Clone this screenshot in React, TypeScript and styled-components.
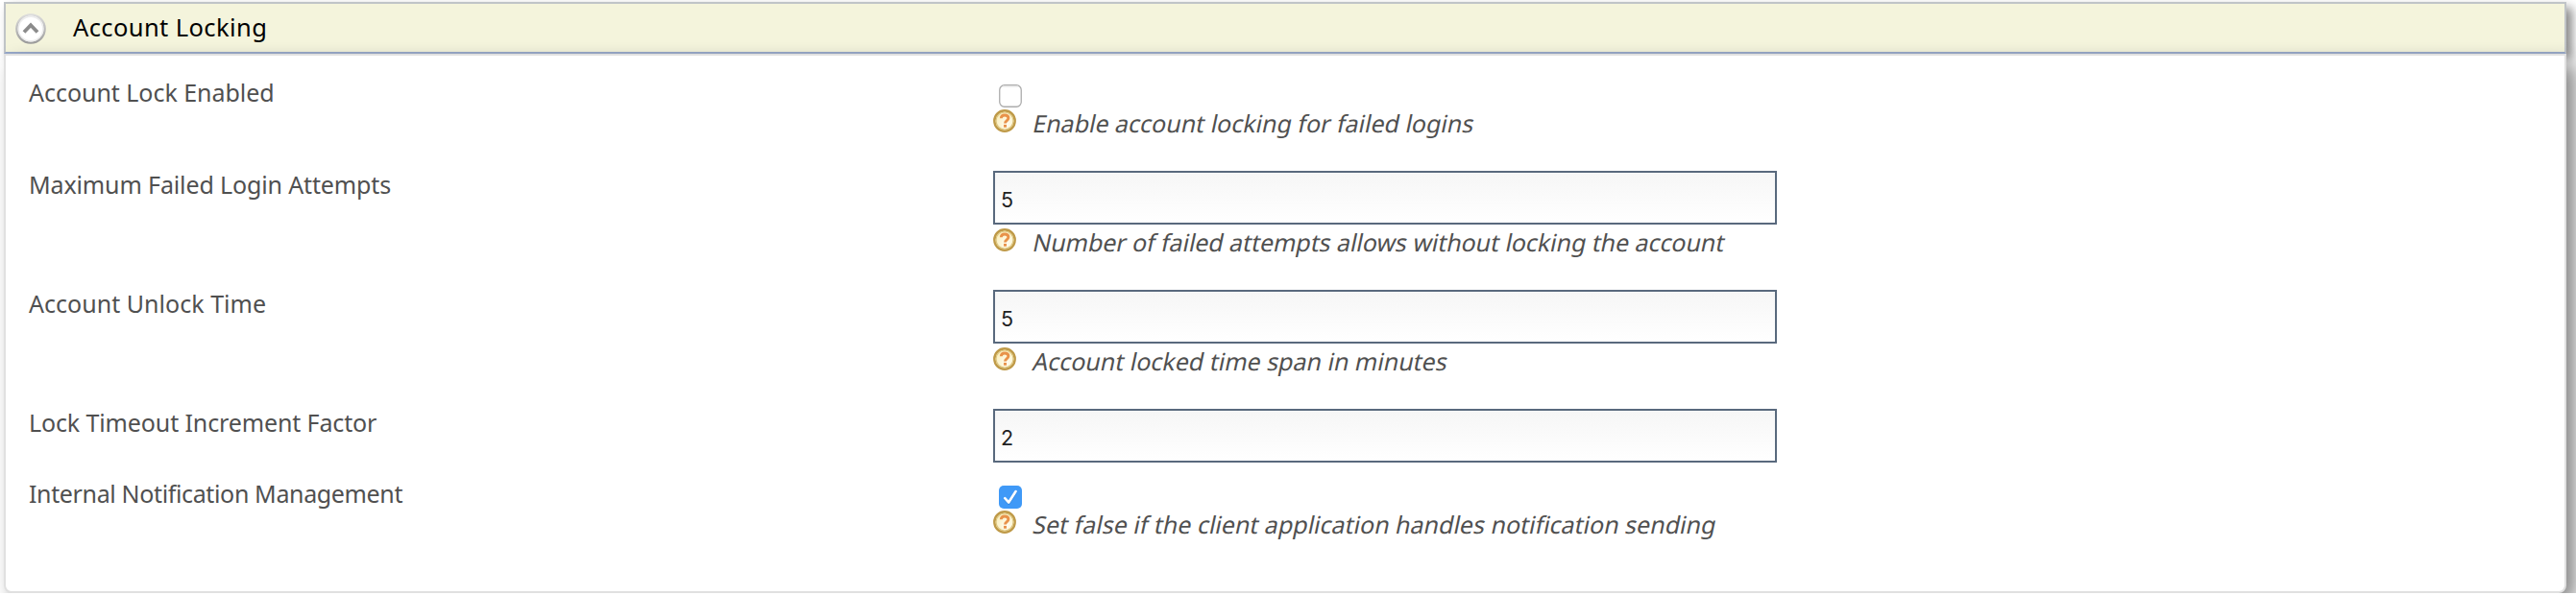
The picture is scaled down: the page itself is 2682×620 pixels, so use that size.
import React from "react";
import styled, { createGlobalStyle } from "styled-components";

const GlobalStyle = createGlobalStyle`
  *, *::before, *::after { box-sizing: border-box; }
  body {
    margin: 0;
    background: #fff;
    font-family: "Noto Sans", sans-serif;
    overflow: hidden;
  }
`;

const Panel = styled.section`
  display: flex;
  flex-direction: column;
  width: 2668px;
  padding-top: 2px;
  margin-left: 4px;
`;

const Header = styled.header`
  display: flex;
  align-items: flex-start;
  height: 54px;
  padding: 10px 10px 0;
  border: 2px solid #c0c4c7;
  border-bottom-color: #94a6c8;
  background: #f4f4dc;
  box-shadow: 6px 6px 10px #888;
`;

const Title = styled.h2`
  margin: -3px 0 0 28px;
  font-size: 25.5px;
  font-weight: 400;
  line-height: 34px;
  letter-spacing: 0.4px;
  color: #000;
`;

const Body = styled.div`
  display: flex;
  flex-direction: column;
  height: 562px;
  padding: 18px 0 0 24px;
  border: 2px solid #e0e0e0;
  border-radius: 0 0 8px 8px;
  background: #fff;
  box-shadow: 10px 10px 20px #888;
`;

const Row = styled.div<{ $height: number }>`
  display: grid;
  grid-template-columns: 1004px 816px;
  height: ${(p) => p.$height}px;
`;

const Label = styled.label<{ $tracking: number }>`
  padding-top: 3px;
  font-size: 25px;
  line-height: 34px;
  letter-spacing: ${(p) => p.$tracking}px;
  color: #505050;
`;

const Field = styled.div`
  display: flex;
  flex-direction: column;
  padding-top: 6px;
`;

const TextInput = styled.input`
  flex: none;
  width: 816px;
  height: 56px;
  padding: 4px 6px 0;
  border: 2px solid #59697d;
  border-radius: 0;
  background: linear-gradient(#f6f6f6, #fff);
  font-family: Inter, sans-serif;
  font-size: 21.5px;
  color: #222;
  outline: none;
`;

const CheckSvg = styled.svg`
  flex: none;
  width: 24px;
  height: 24px;
  margin: 6px 0 -2px 6px;
  overflow: visible;
`;

const Hint = styled.div`
  display: flex;
  align-items: flex-start;
  margin-top: 4px;
`;

const HintText = styled.span<{ $tracking: number }>`
  margin: -3px 0 0 16px;
  font-size: 25px;
  line-height: 34px;
  letter-spacing: ${(p) => p.$tracking}px;
  white-space: nowrap;
  color: #505050;
  transform: skewX(-12deg);
  transform-origin: 0 27px;
`;

const CollapseIcon = () => (
  <svg width="32" height="32" viewBox="0 0 32 32">
    <defs>
      <linearGradient id="ring" x1="0" y1="0" x2="0" y2="1">
        <stop offset="0" stopColor="#dcdcdc" />
        <stop offset="1" stopColor="#9c9c9c" />
      </linearGradient>
    </defs>
    <circle cx="16" cy="16" r="14.6" fill="#fff" stroke="url(#ring)" strokeWidth="2.4" />
    <circle cx="16" cy="16" r="12.8" fill="none" stroke="#ececec" strokeWidth="1.4" />
    <path d="M9 19.500 16 12.300 23 19.500" fill="none" stroke="#8b8b8b" strokeWidth="3.800" />
  </svg>
);

const HelpIcon = () => (
  <svg width="24" height="24" viewBox="0 0 24 24">
    <defs>
      <radialGradient id="face" cx="0.6" cy="0.65" r="0.6">
        <stop offset="0" stopColor="#fffdf2" />
        <stop offset="1" stopColor="#faeebb" />
      </radialGradient>
    </defs>
    <circle cx="12" cy="12" r="10.7" fill="url(#face)" stroke="#bf9a48" strokeWidth="2.4" />
    <circle cx="12" cy="12" r="9" fill="none" stroke="#dcc47e" strokeWidth="1.2" />
    <path
      d="M8.300 9.300C8.400 6.900 10 6 12 6c2.200 0 3.900 1.100 3.900 3.100 0 2.800-3.400 2.900-3.400 5.400"
      fill="none"
      stroke="#e8924a"
      strokeWidth="2.900"
    />
    <rect x="11" y="15.900" width="3" height="2.800" fill="#e8924a" />
  </svg>
);

const Checkbox = ({ checked }: { checked: boolean }) => (
  <CheckSvg viewBox="0 0 24 24" role="checkbox" aria-checked={checked}>
    {checked ? (
      <>
        <rect width="24" height="24" rx="5" fill="#3f99f7" />
        <path
          d="M6.200 14.200 10.200 18.500 17.600 7"
          fill="none"
          stroke="#2a7fd8"
          strokeWidth="2.400"
          strokeLinecap="round"
          strokeLinejoin="round"
        />
        <path
          d="M6.200 13.200 10.200 17.500 17.600 6"
          fill="none"
          stroke="#fff"
          strokeWidth="2.600"
          strokeLinecap="round"
          strokeLinejoin="round"
        />
      </>
    ) : (
      <>
        <rect x="0.75" y="0.75" width="22.5" height="22.5" rx="5" fill="#fff" stroke="#acacac" strokeWidth="1.3" />
        <path d="M4 2H20" stroke="#e6e6e6" strokeWidth="1.200" />
      </>
    )}
  </CheckSvg>
);

interface Setting {
  label: string;
  tracking: number;
  height: number;
  checked?: boolean;
  value?: string;
  hint?: string;
  hintTracking?: number;
}

const settings: Setting[] = [
  { label: "Account Lock Enabled", tracking: -0.03, height: 96, checked: false, hint: "Enable account locking for failed logins", hintTracking: 0 },
  { label: "Maximum Failed Login Attempts", tracking: -0.13, height: 124, value: "5", hint: "Number of failed attempts allows without locking the account", hintTracking: -0.06 },
  { label: "Account Unlock Time", tracking: 0.03, height: 124, value: "5", hint: "Account locked time span in minutes", hintTracking: 0 },
  { label: "Lock Timeout Increment Factor", tracking: -0.12, height: 74, value: "2" },
  { label: "Internal Notification Management", tracking: -0.36, height: 90, checked: true, hint: "Set false if the client application handles notification sending", hintTracking: 0 },
];

export default function App() {
  return (
    <>
      <GlobalStyle />
      <Panel>
        <Header>
          <CollapseIcon />
          <Title>Account Locking</Title>
        </Header>
        <Body>
          {settings.map((s) => (
            <Row key={s.label} $height={s.height}>
              <Label $tracking={s.tracking}>{s.label}</Label>
              <Field>
                {s.value !== undefined ? <TextInput defaultValue={s.value} /> : <Checkbox checked={!!s.checked} />}
                {s.hint && (
                  <Hint>
                    <HelpIcon />
                    <HintText $tracking={s.hintTracking ?? 0}>{s.hint}</HintText>
                  </Hint>
                )}
              </Field>
            </Row>
          ))}
        </Body>
      </Panel>
    </>
  );
}
